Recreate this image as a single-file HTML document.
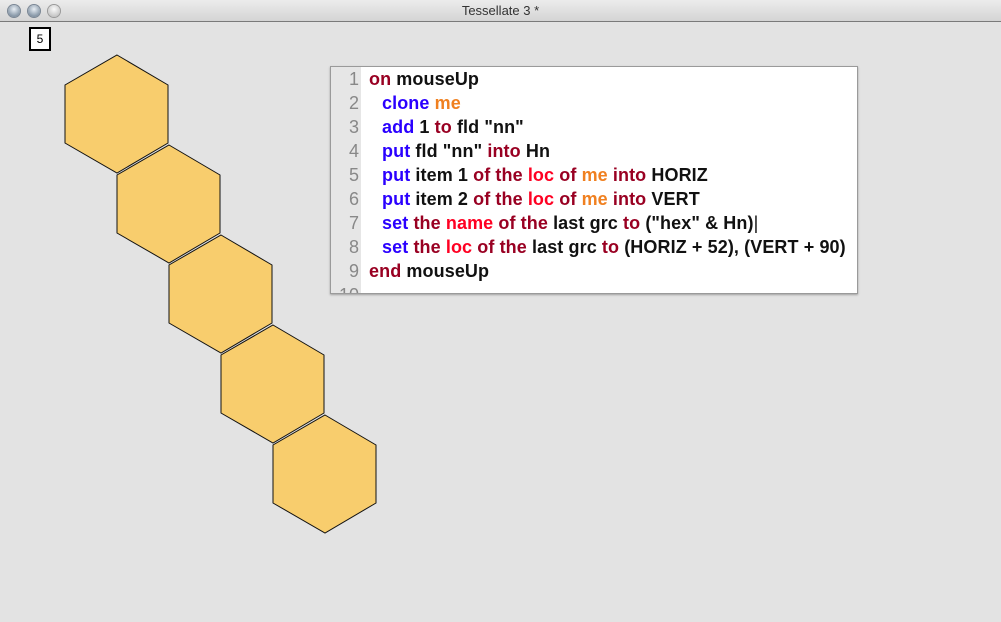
<!DOCTYPE html>
<html><head><style>
body{margin:0;width:1001px;height:622px;background:#e3e3e3;position:relative;overflow:hidden;font-family:"Liberation Sans",sans-serif}
.tb{position:absolute;left:0;top:0;width:1001px;height:21px;background:linear-gradient(#ececec,#d4d4d4);border-bottom:1px solid #7a7a7a;text-align:center;font-size:13px;line-height:22px;color:#333}
.dot{position:absolute;top:5px;width:12px;height:12px;border-radius:50%;background:radial-gradient(circle at 50% 35%,#e8eef4,#8898a8 70%,#6a7888);box-shadow:0 0 0 1px #7a8694}
.box5{position:absolute;left:29px;top:27px;width:18px;height:20px;border:2px solid #000;background:#fff;font-size:12px;text-align:center;line-height:20px}
.fld{position:absolute;left:330px;top:66px;width:526px;height:226px;background:#fff;border:1px solid #9a9a9a;box-shadow:0 1px 2px rgba(0,0,0,.3);overflow:hidden}
.gut{position:absolute;left:0;top:0;width:30px;height:100%;background:#e6e6e6}
.ln{position:absolute;left:0;width:28px;text-align:right;color:#888;font-size:18px}
.cd{position:absolute;left:38px;font-size:18px;font-weight:bold;white-space:pre;color:#111;letter-spacing:0.1px}
.i{left:51px}
.k{color:#990022}.b{color:#2a00ff}.o{color:#f08020}.r{color:#ff0022}
</style></head><body>
<div class="tb">Tessellate 3 *</div>
<div class="dot" style="left:8px"></div><div class="dot" style="left:28px"></div><div class="dot" style="left:48px;background:radial-gradient(circle at 50% 35%,#fafafa,#c8c8c8 70%,#aaa);box-shadow:0 0 0 1px #999"></div>
<div class="box5">5</div>
<svg width="1001" height="622" style="position:absolute;left:0;top:0">
<g fill="#f8cd6d" stroke="#111" stroke-width="1">
<polygon points="117,55 168,85 168,143 117,173 65,143 65,85"/>
<polygon points="169,145 220,175 220,233 169,263 117,233 117,175"/>
<polygon points="221,235 272,265 272,323 221,353 169,323 169,265"/>
<polygon points="273,325 324,355 324,413 273,443 221,413 221,355"/>
<polygon points="325,415 376,445 376,503 325,533 273,503 273,445"/>
</g></svg>
<div class="fld"><div class="gut"></div>
<div class="ln" style="top:2px">1</div><div class="ln" style="top:26px">2</div><div class="ln" style="top:50px">3</div><div class="ln" style="top:74px">4</div><div class="ln" style="top:98px">5</div><div class="ln" style="top:122px">6</div><div class="ln" style="top:146px">7</div><div class="ln" style="top:170px">8</div><div class="ln" style="top:194px">9</div><div class="ln" style="top:218px">10</div>
<div class="cd" style="top:2px"><span class="k">on</span> mouseUp</div>
<div class="cd i" style="top:26px"><span class="b">clone</span> <span class="o">me</span></div>
<div class="cd i" style="top:50px"><span class="b">add</span> 1 <span class="k">to</span> fld "nn"</div>
<div class="cd i" style="top:74px"><span class="b">put</span> fld "nn" <span class="k">into</span> Hn</div>
<div class="cd i" style="top:98px"><span class="b">put</span> item 1 <span class="k">of the</span> <span class="r">loc</span> <span class="k">of</span> <span class="o">me</span> <span class="k">into</span> HORIZ</div>
<div class="cd i" style="top:122px"><span class="b">put</span> item 2 <span class="k">of the</span> <span class="r">loc</span> <span class="k">of</span> <span class="o">me</span> <span class="k">into</span> VERT</div>
<div class="cd i" style="top:146px"><span class="b">set</span> <span class="k">the</span> <span class="r">name</span> <span class="k">of the</span> last grc <span class="k">to</span> ("hex" &amp; Hn)<span style="font-weight:normal">|</span></div>
<div class="cd i" style="top:170px"><span class="b">set</span> <span class="k">the</span> <span class="r">loc</span> <span class="k">of the</span> last grc <span class="k">to</span> (HORIZ + 52), (VERT + 90)</div>
<div class="cd" style="top:194px"><span class="k">end</span> mouseUp</div>
</div>
</body></html>
